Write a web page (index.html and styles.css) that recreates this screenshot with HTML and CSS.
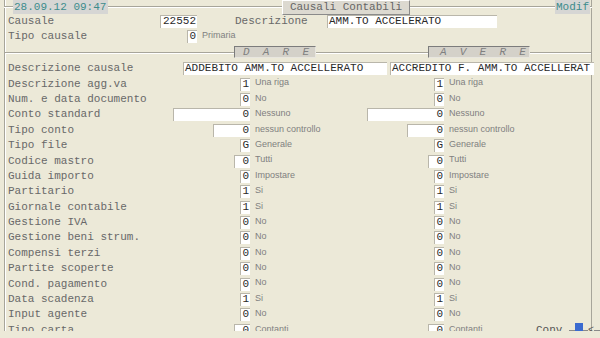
FILE: index.html
```html
<!DOCTYPE html>
<html lang="it">
<head>
  <meta charset="UTF-8">
  <title>Causali Contabili</title>
  <link rel="stylesheet" href="styles.css">
</head>
<body>
  <div class="frame">
    <div class="topbar">
      <span class="line corner"></span>
      <span class="tag date">28.09.12 09:47</span>
      <span class="line gap1"></span>
      <span class="title">Causali Contabili</span>
      <span class="line gap2"></span>
      <span class="tag modif">Modif</span>
      <span class="line end"></span>
    </div>

    <div class="top">
      <div class="row">
        <span class="label">Causale</span>
        <span class="val w5">22552</span>
        <span></span>
        <span class="label">Descrizione</span>
        <span class="val text">AMM.TO ACCELERATO</span>
      </div>
      <div class="row">
        <span class="label">Tipo causale</span>
        <span class="val w1">0</span>
        <span class="note">Primaria</span>
      </div>
    </div>

    <div class="heads">
      <span class="line l1"></span>
      <span class="side dare">D  A  R  E</span>
      <span class="line l2"></span>
      <span class="side avere">A  V  E  R  E</span>
      <span class="line l3"></span>
    </div>

    <div class="rows">
      <div class="row wide">
        <span class="label">Descrizione causale</span>
        <span class="val text">ADDEBITO AMM.TO ACCELLERATO</span>
        <span class="val text">ACCREDITO F. AMM.TO ACCELLERAT</span>
      </div>
      <div class="row">
        <span class="label">Descrizione agg.va</span>
        <span class="val w1">1</span><span class="note">Una riga</span>
        <span class="val w1">1</span><span class="note">Una riga</span>
      </div>
      <div class="row">
        <span class="label">Num. e data documento</span>
        <span class="val w1">0</span><span class="note">No</span>
        <span class="val w1">0</span><span class="note">No</span>
      </div>
      <div class="row">
        <span class="label">Conto standard</span>
        <span class="val w12">0</span><span class="note">Nessuno</span>
        <span class="val w12">0</span><span class="note">Nessuno</span>
      </div>
      <div class="row">
        <span class="label">Tipo conto</span>
        <span class="val w6">0</span><span class="note">nessun controllo</span>
        <span class="val w6">0</span><span class="note">nessun controllo</span>
      </div>
      <div class="row">
        <span class="label">Tipo file</span>
        <span class="val w1">G</span><span class="note">Generale</span>
        <span class="val w1">G</span><span class="note">Generale</span>
      </div>
      <div class="row">
        <span class="label">Codice mastro</span>
        <span class="val w2">0</span><span class="note">Tutti</span>
        <span class="val w2">0</span><span class="note">Tutti</span>
      </div>
      <div class="row">
        <span class="label">Guida importo</span>
        <span class="val w1">0</span><span class="note">Impostare</span>
        <span class="val w1">0</span><span class="note">Impostare</span>
      </div>
      <div class="row">
        <span class="label">Partitario</span>
        <span class="val w1">1</span><span class="note">Si</span>
        <span class="val w1">1</span><span class="note">Si</span>
      </div>
      <div class="row">
        <span class="label">Giornale contabile</span>
        <span class="val w1">1</span><span class="note">Si</span>
        <span class="val w1">1</span><span class="note">Si</span>
      </div>
      <div class="row">
        <span class="label">Gestione IVA</span>
        <span class="val w1">0</span><span class="note">No</span>
        <span class="val w1">0</span><span class="note">No</span>
      </div>
      <div class="row">
        <span class="label">Gestione beni strum.</span>
        <span class="val w1">0</span><span class="note">No</span>
        <span class="val w1">0</span><span class="note">No</span>
      </div>
      <div class="row">
        <span class="label">Compensi terzi</span>
        <span class="val w1">0</span><span class="note">No</span>
        <span class="val w1">0</span><span class="note">No</span>
      </div>
      <div class="row">
        <span class="label">Partite scoperte</span>
        <span class="val w1">0</span><span class="note">No</span>
        <span class="val w1">0</span><span class="note">No</span>
      </div>
      <div class="row">
        <span class="label">Cond. pagamento</span>
        <span class="val w1">0</span><span class="note">No</span>
        <span class="val w1">0</span><span class="note">No</span>
      </div>
      <div class="row">
        <span class="label">Data scadenza</span>
        <span class="val w1">1</span><span class="note">Si</span>
        <span class="val w1">1</span><span class="note">Si</span>
      </div>
      <div class="row">
        <span class="label">Input agente</span>
        <span class="val w1">0</span><span class="note">No</span>
        <span class="val w1">0</span><span class="note">No</span>
      </div>
      <div class="row">
        <span class="label">Tipo carta</span>
        <span class="val w2">0</span><span class="note">Contanti</span>
        <span class="val w2">0</span>
        <div class="last">
          <span class="note">Contanti</span>
          <span class="conv">
            <span>Conv.</span>
            <span class="tick t1"></span>
            <span class="cursor"></span>
            <span class="tick t2"></span>
            <span class="arrow">&lt;</span>
            <span class="tick t3"></span>
          </span>
        </div>
      </div>
    </div>
  </div>
</body>
</html>
```

FILE: styles.css
```css
* {
  box-sizing: border-box;
}
body {
  margin: 0;
  background-color: #ece9d8;
  color: #686868;
  font-family: "Liberation Mono", monospace;
  font-size: 11px;
  overflow: hidden;
}
.frame {
  margin: 7px 0 0 4px;
  width: 588px;
  height: 331px;
  border-left: 1px solid #a7a59a;
  border-right: 1px solid #a7a59a;
  box-shadow: inset 1px 0 0 #fff;
}

/* header strip over the top border */
.topbar {
  display: flex;
  align-items: center;
  height: 14px;
  margin: -7px -1px 0 -1px;
}
.line {
  flex: none;
  height: 2px;
  border-top: 1px solid #a7a59a;
  border-bottom: 1px solid #fff;
}
.corner { width: 9px; }
.gap1 { width: 174px; }
.gap2 { width: 145px; }
.end { flex: 1; }
.tag {
  height: 14px;
  line-height: 14px;
  padding-left: 1px;
  background: #d6d6d4;
  color: #3d8c8c;
}
.date { width: 95px; }
.modif { width: 35px; }
.title {
  width: 128px;
  height: 15px;
  margin-top: 1px;
  line-height: 13px;
  text-align: center;
  background: #dcd9d0;
  color: #666;
  border: 1px solid;
  border-color: #fff #8a8a8a #8a8a8a #fff;
}

/* rows */
.row {
  display: grid;
  grid-template-columns: 152px 90px 118px 76px 1fr;
  align-items: center;
  padding-left: 3px;
  white-space: nowrap;
}
.top .row {
  height: 15px;
  grid-template-columns: 152px 37px 38px 92px 170px;
}
.rows .row {
  height: 15.4px;
}
.rows .wide {
  grid-template-columns: 172px 204px 204px;
  column-gap: 3px;
}
.label {
  line-height: 13px;
}
.val {
  justify-self: end;
  height: 13px;
  line-height: 13px;
  padding: 0 1px;
  background: #fff;
  color: #2a2a2a;
  text-align: right;
  box-shadow: inset 1px 1px 0 #b9b6aa;
}
.val.text {
  justify-self: stretch;
  text-align: left;
  padding-left: 2px;
  overflow: hidden;
}
.w1 { width: 10px; }
.w2 { width: 16px; }
.w5 { width: 37px; }
.w6 { width: 37px; }
.w12 { width: 77px; }
.note {
  align-self: start;
  padding-left: 5px;
  line-height: 12px;
  font-family: "Liberation Sans", Arial, sans-serif;
  font-size: 9px;
  color: #808080;
}

/* DARE / AVERE headings on the separator */
.heads {
  display: flex;
  align-items: flex-start;
  height: 17px;
}
.heads .line { margin-top: 8px; }
.l1 { width: 229px; }
.l2 { width: 112px; }
.l3 { flex: 1; }
.side {
  flex: none;
  height: 12px;
  margin-top: 2px;
  line-height: 10px;
  white-space: pre;
  font-style: italic;
  color: #808080;
  background: #d4d1c9;
  border: 1px solid;
  border-color: #7c7c7c #e8e6df #e8e6df #7c7c7c;
}
.dare { width: 82px; padding-left: 8px; }
.avere { width: 102px; padding-left: 11px; }

/* last row: conversion marker */
.last {
  display: flex;
  align-self: stretch;
  margin-right: -9px;
}
.conv {
  display: flex;
  align-items: center;
  margin-left: auto;
  line-height: 13px;
  color: #555;
}
.tick {
  height: 1px;
  background: #8a8a8a;
}
.t1 { width: 6px; }
.t2 { width: 5px; }
.t3 { width: 6px; }
.cursor {
  width: 8px;
  height: 14px;
  background: #3b6bd0;
}
.arrow {
  width: 6px;
  font-size: 10px;
}
```
